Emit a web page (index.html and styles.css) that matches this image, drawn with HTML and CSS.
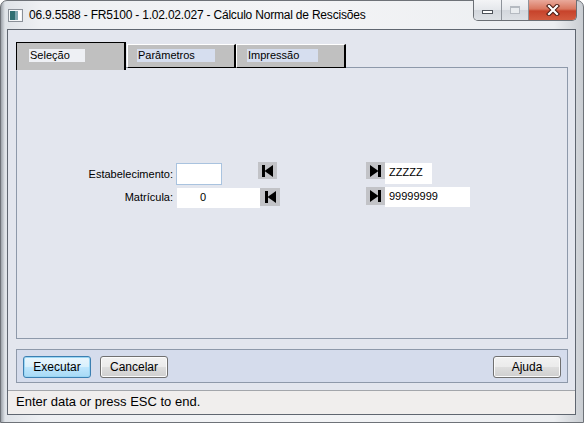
FILE: index.html
```html
<!DOCTYPE html>
<html lang="pt">
<head>
  <meta charset="UTF-8">
  <title>06.9.5588 - FR5100 - 1.02.02.027 - Cálculo Normal de Rescisões</title>
  <link rel="stylesheet" href="styles.css">
</head>
<body>
  <div class="window">
    <div class="titlebar">
      <svg class="app-icon" width="15" height="13" viewBox="0 0 15 13">
        <rect x="0.5" y="0.5" width="14" height="12" fill="#f4f6f8" stroke="#8a9098"/>
        <rect x="2" y="2" width="5" height="9" fill="#2f6f72"/>
        <rect x="7" y="2" width="3" height="9" fill="#7fa7b0"/>
        <rect x="10" y="2" width="3" height="9" fill="#ffffff"/>
      </svg>
      <span class="title">06.9.5588 - FR5100 - 1.02.02.027 - Cálculo Normal de Rescisões</span>
      <div class="caption-buttons">
        <span class="cap-btn cap-min"><span class="min-glyph"></span></span>
        <span class="cap-btn cap-max"><span class="max-glyph"></span></span>
        <span class="cap-btn cap-close">
          <svg width="14" height="12" viewBox="0 0 14 12">
            <path d="M3 2 L11 10 M11 2 L3 10" stroke="#4a1a12" stroke-width="4.2" stroke-linecap="square"/>
            <path d="M3 2 L11 10 M11 2 L3 10" stroke="#ffffff" stroke-width="2.2" stroke-linecap="square"/>
          </svg>
        </span>
      </div>
    </div>

    <div class="client">
      <div class="main">
        <div class="tabs">
          <div class="tab active"><span class="tab-label label-sel">Seleção</span></div>
          <div class="tab second"><span class="tab-label label-par">Parâmetros</span></div>
          <div class="tab third"><span class="tab-label label-imp">Impressão</span></div>
        </div>

        <div class="tab-page">
          <div class="form">
            <div class="row row-first">
              <span class="label">Estabelecimento:</span>
              <span class="field field-estab focused"></span>
              <span class="nav-btn nav-first-a">
                <svg width="11" height="12" viewBox="0 0 11 12"><rect x="0" y="0" width="3" height="12" fill="#000"/><polygon points="2.5,6 11,0 11,12" fill="#000"/></svg>
              </span>
              <span class="nav-btn nav-last-a">
                <svg width="11" height="12" viewBox="0 0 11 12"><polygon points="0,0 8.5,6 0,12" fill="#000"/><rect x="8" y="0" width="3" height="12" fill="#000"/></svg>
              </span>
              <span class="field field-estab-to">ZZZZZ</span>
            </div>
            <div class="row row-second">
              <span class="label">Matrícula:</span>
              <span class="field field-mat">0</span>
              <span class="nav-btn nav-first-b">
                <svg width="11" height="12" viewBox="0 0 11 12"><rect x="0" y="0" width="3" height="12" fill="#000"/><polygon points="2.5,6 11,0 11,12" fill="#000"/></svg>
              </span>
              <span class="nav-btn nav-last-b">
                <svg width="11" height="12" viewBox="0 0 11 12"><polygon points="0,0 8.5,6 0,12" fill="#000"/><rect x="8" y="0" width="3" height="12" fill="#000"/></svg>
              </span>
              <span class="field field-mat-to">99999999</span>
            </div>
          </div>
        </div>

        <div class="button-bar">
          <button class="btn btn-default">Executar</button>
          <button class="btn">Cancelar</button>
          <button class="btn btn-help">Ajuda</button>
        </div>
      </div>

      <div class="status">Enter data or press ESC to end.</div>
    </div>
  </div>
</body>
</html>
```

FILE: styles.css
```css
body {
  margin: 0;
  padding: 0;
  background-color: #ffffff;
  font-family: "Liberation Sans", Arial, sans-serif;
}

.window {
  width: 584px;
  height: 423px;
  box-sizing: border-box;
  border: 1px solid #6e7278;
  border-radius: 7px 7px 0 0;
  background: linear-gradient(to right, #9da3aa 0px, #dfe3e8 4px, #eef0f3 40px, #f3f4f6 50%, #eceef1 95%, #c9cdd2 100%);
  display: flex;
  flex-direction: column;
}

/* title bar */
.titlebar {
  height: 28px;
  display: flex;
  align-items: flex-start;
  padding-left: 7px;
}

.app-icon {
  margin-top: 8px;
  margin-right: 6px;
}

.title {
  margin-top: 7px;
  font-size: 12px;
  letter-spacing: -0.2px;
  color: #000;
}

.caption-buttons {
  margin-left: auto;
  margin-right: 6px;
  margin-top: -1px;
  height: 20px;
  display: flex;
  border: 1px solid #6b6f75;
  border-top: none;
  border-radius: 0 0 5px 5px;
  overflow: hidden;
}

.cap-btn {
  display: flex;
  align-items: center;
  justify-content: center;
  height: 20px;
  background: linear-gradient(#f3f4f6 0%, #e4e7eb 50%, #d3d7dd 51%, #dde1e6 100%);
}

.cap-min {
  width: 27px;
  border-right: 1px solid #8e939a;
}

.cap-max {
  width: 26px;
  border-right: 1px solid #8e939a;
}

.cap-close {
  width: 47px;
  background: linear-gradient(#e9a99b 0%, #d9775f 45%, #c7432b 55%, #d35b3f 100%);
}

.min-glyph {
  width: 9px;
  height: 2px;
  margin-top: 4px;
  background-color: #fff;
  border: 1px solid #4d525a;
}

.max-glyph {
  width: 8px;
  height: 5px;
  border: 1px solid #b5bac1;
  border-top-width: 2px;
  background-color: #e9ecef;
}

/* client area */
.client {
  flex: 1;
  margin: 0 7px 7px 6px;
  border: 1px solid #5f6670;
  background-color: #e3e6ee;
  display: flex;
  flex-direction: column;
}

.main {
  flex: 1;
  padding: 12px 7px 0 8px;
  display: flex;
  flex-direction: column;
}

/* tabs */
.tabs {
  height: 25px;
  display: flex;
  align-items: flex-end;
  font-size: 11px;
}

.tab {
  box-sizing: border-box;
  background-color: #c0c0c0;
  position: relative;
  z-index: 1;
}

.tab.active {
  width: 110px;
  height: 28px;
  margin-bottom: -3px;
  border-top: 1px solid #000;
  border-left: 1px solid #000;
  border-right: 2px solid #000;
  padding: 6px 0 0 12px;
  margin-right: 1px;
}

.tab.second,
.tab.third {
  height: 24px;
  margin-bottom: -1px;
  border-top: 1px solid #ffffff;
  border-left: 1px solid #ffffff;
  border-right: 2px solid #000;
  border-bottom: 1px solid #000;
  padding: 4px 0 0 9px;
}

.tab.second {
  width: 109px;
}

.tab.third {
  width: 110px;
  padding-left: 10px;
}

.tab-label {
  display: block;
  height: 13px;
  line-height: 13px;
  padding-left: 1px;
  background-color: #d6deef;
  color: #000;
}

.label-sel {
  width: 55px;
  background-color: #eef0f4;
}

.label-par {
  width: 77px;
}

.label-imp {
  width: 70px;
}

.tab-page {
  height: 272px;
  box-sizing: border-box;
  border: 1px solid #8e99aa;
  background-color: #e3e6ee;
}

/* form */
.form {
  padding-top: 94px;
  font-size: 11px;
  color: #000;
}

.row {
  display: flex;
  align-items: flex-start;
}

.row-first {
  height: 25px;
}

.label {
  width: 156px;
  text-align: right;
}

.row-first .label {
  margin-top: 6px;
}

.row-second .label {
  margin-top: 4px;
}

.field {
  box-sizing: border-box;
  background-color: #fff;
  line-height: 18px;
  padding-left: 4px;
}

.field.focused {
  border: 1px solid #a9c3df;
}

.field-estab {
  width: 46px;
  height: 22px;
  margin-top: 1px;
  margin-left: 3px;
}

.field-estab-to {
  width: 47px;
  height: 21px;
  margin-top: 1px;
}

.field-mat {
  width: 83px;
  height: 20px;
  margin-top: 1px;
  margin-left: 4px;
  padding-left: 23px;
}

.field-mat-to {
  width: 85px;
  height: 20px;
}

.nav-btn {
  box-sizing: border-box;
  display: flex;
  align-items: center;
  justify-content: center;
  background-color: #c2c3c7;
}

.nav-first-a {
  width: 19px;
  height: 17px;
  margin-left: 36px;
}

.nav-last-a {
  width: 19px;
  height: 17px;
  margin-left: 89px;
}

.nav-first-b {
  width: 20px;
  height: 18px;
  margin-top: 1px;
}

.nav-last-b {
  width: 19px;
  height: 18px;
  margin-left: 86px;
}

/* buttons */
.button-bar {
  margin-top: 10px;
  height: 34px;
  box-sizing: border-box;
  border: 1px solid #8e99aa;
  background-color: #d5dcec;
  padding: 6px 6px 0 6px;
  display: flex;
  align-items: flex-start;
  gap: 9px;
}

.btn {
  width: 68px;
  height: 22px;
  padding: 0;
  border: 1px solid #707070;
  border-radius: 3px;
  background: linear-gradient(#f2f2f2 0%, #ebebeb 48%, #dddddd 52%, #cfcfcf 100%);
  box-shadow: inset 0 0 0 1px #fbfbfb;
  font-family: "Liberation Sans", Arial, sans-serif;
  font-size: 12px;
  color: #000;
}

.btn-default {
  border-color: #3c7fb1;
  background: linear-gradient(#eaf6fd 0%, #d9f0fc 48%, #bee6fd 52%, #a7d9f5 100%);
  box-shadow: inset 0 0 0 1px #9ad6f4;
}

.btn-help {
  margin-left: auto;
}

/* status bar */
.status {
  height: 24px;
  box-sizing: border-box;
  border-top: 1px solid #a3a6ab;
  background-color: #f0eeed;
  padding-left: 8px;
  line-height: 22px;
  font-size: 13px;
  color: #000;
}
```
